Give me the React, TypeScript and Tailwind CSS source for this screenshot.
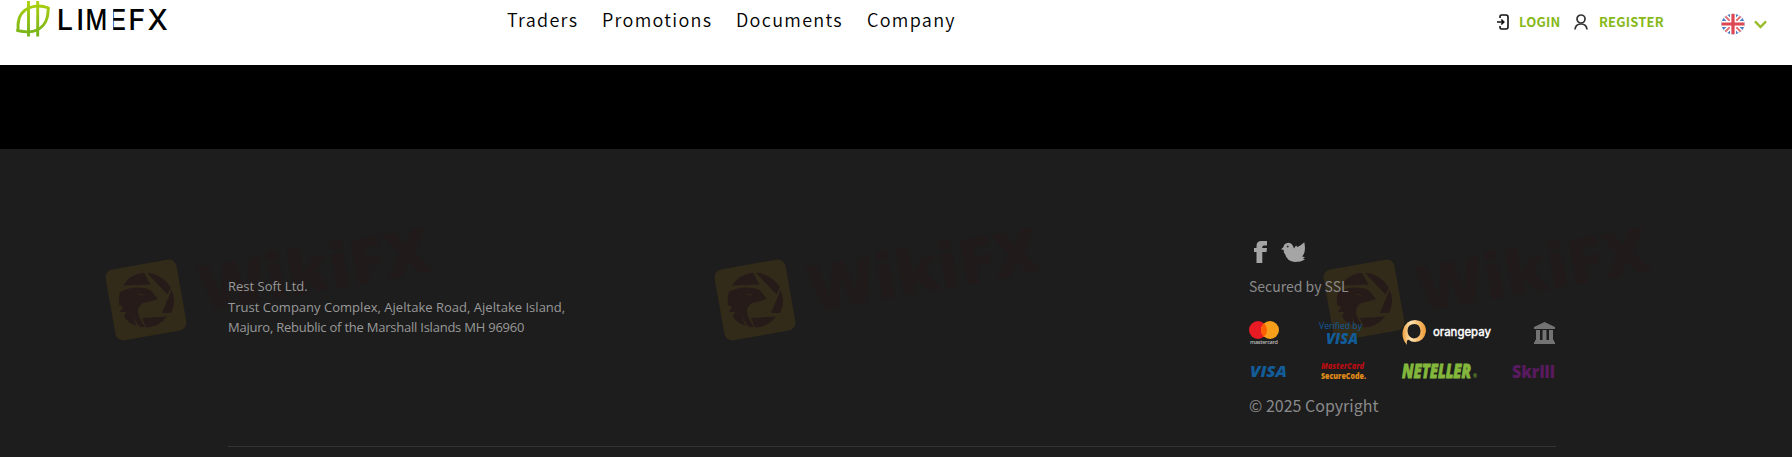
import { ReactNode } from 'react';

const NAV = [
  { label: 'Traders', width: 'w-[95px]' },
  { label: 'Promotions', width: 'w-[134px]' },
  { label: 'Documents', width: 'w-[131px]' },
  { label: 'Company', width: 'w-[92px]' },
];

export default function App() {
  return (
    <div className="h-[457px] w-full overflow-hidden bg-[#1d1d1d] font-['Noto_Sans_CJK_SC',sans-serif]">
      <Header />
      <div className="h-[84px] bg-black" />
      <Footer />
    </div>
  );
}

function Header() {
  return (
    <header className="flex h-[65px] items-start bg-white">
      <Logo />
      <nav className="ml-[338px] flex pt-[5px] text-[18px] leading-[28px] font-[350] tracking-[1.300px] text-black">
        {NAV.map((n) => (
          <a key={n.label} href="#" className={`${n.width} whitespace-nowrap`}>
            {n.label}
          </a>
        ))}
      </nav>
      <div className="ml-auto flex items-center pt-[9px] pr-[25px] text-[13px] leading-[20px] font-bold text-[#86b817]">
        <LoginIcon />
        <a href="#" className="ml-[10px] w-[55px] tracking-[0.2px]">LOGIN</a>
        <UserIcon />
        <a href="#" className="ml-[11px] w-[122px] tracking-[0.2px]">REGISTER</a>
        <Flag />
        <svg className="mt-[5px] ml-[9px] h-[9px] w-[13px]" viewBox="0 0 13 9" fill="none">
          <path d="M1 1.3 6.5 7 12 1.3" stroke="#98bd2b" strokeWidth="2.4" />
        </svg>
      </div>
    </header>
  );
}

function Logo() {
  return (
    <svg className="h-[40px] w-[169px]" viewBox="0 0 169 40">
      <defs>
        <linearGradient id="lime" x1="0" y1="0" x2="0" y2="40" gradientUnits="userSpaceOnUse">
          <stop offset="0" stopColor="#b0d30b" />
          <stop offset="1" stopColor="#6fae1b" />
        </linearGradient>
      </defs>
      <g fill="none" stroke="url(#lime)" strokeWidth="2.9" strokeLinejoin="round">
        <path d="M17.500 30.500C18 29 18.500 28 18 25C18.500 16 23 10 30 7.500C36 5.500 43 5.800 48.500 8C47.500 11 48.500 14 47 18C45.500 24 42 27.500 37 30C31 33 24 32 17.500 30.500Z" />
        <path d="M28.500 1V36.500M37.700 1V36.500" />
      </g>
      <g fontFamily="Inter, sans-serif" fontSize="29" fontWeight="500" fill="#000">
        <text x="56.800 76.300" y="30">LI</text>
        <text transform="scale(.82 1)" x="104.300" y="30">M</text>
        <text transform="scale(1.1 1)" x="97.800" y="30">E</text>
        <text x="128.300 147.500" y="30">FX</text>
      </g>
      <rect x="108.400" y="8" width="4.800" height="24" fill="#fff" />
    </svg>
  );
}

function LoginIcon() {
  return (
    <svg className="h-[16px] w-[12px]" viewBox="0 0 12 16" fill="none" stroke="#111" strokeWidth="1.600">
      <path d="M3 4V2.500Q3 1 4.500 1H9Q11 1 11 3V13Q11 15 9 15H4.500Q3 15 3 13.500V12" />
      <path d="M0 8H6.500M4.300 5.500 6.800 8 4.300 10.500" />
    </svg>
  );
}

function UserIcon() {
  return (
    <svg className="h-[16px] w-[14px]" viewBox="0 0 14 16" fill="none" stroke="#333" strokeWidth="1.700">
      <circle cx="7" cy="5" r="4" />
      <path d="M1 15.500Q1.500 10 7 10T13 15.500" />
    </svg>
  );
}

function Flag() {
  return (
    <svg className="mt-[4px] h-[22px] w-[24px]" viewBox="0 0 24 22">
      <clipPath id="flag"><ellipse cx="12" cy="11" rx="11.500" ry="10.300" /></clipPath>
      <g clipPath="url(#flag)">
        <path fill="#4c80c2" d="M0 0H24V22H0Z" />
        <path stroke="#fff" strokeWidth="5" d="M1 0 23 22M23 0 1 22" />
        <path stroke="#e66b73" strokeWidth="1.800" d="M1 0 23 22M23 0 1 22" />
        <path stroke="#fff" strokeWidth="6" d="M12 0V22M0 11H24" />
        <path stroke="#dd4653" strokeWidth="3.200" d="M12 0V22M0 11H24" />
      </g>
    </svg>
  );
}

function Footer() {
  return (
    <footer className="relative h-[308px] bg-[#1d1d1d]">
      <Watermark className="left-[100px]" />
      <Watermark className="left-[709px]" />
      <Watermark className="left-[1318px]" />
      <div className="relative ml-[228px] flex h-[298px] w-[1328px] justify-between border-b border-[#333]">
        <address className="flex flex-col pt-[127px] font-['Open_Sans',sans-serif] text-[13px] leading-[20.600px] font-medium text-[#999] not-italic">
          <span>Rest Soft Ltd.</span>
          <span className="tracking-[0.02px]">Trust Company Complex, Ajeltake Road, Ajeltake Island,</span>
          <span className="tracking-[-0.230px]">Majuro, Rebublic of the Marshall Islands MH 96960</span>
        </address>
        <div className="w-[307px] pt-[91px] text-[#8a8a8a]">
          <Social />
          <p className="mt-[11px] text-[14px] leading-[24px]">Secured by SSL</p>
          <Payments />
          <p className="mt-[1px] text-[16px] leading-[28px]">© 2025 Copyright</p>
        </div>
      </div>
    </footer>
  );
}

function Social() {
  return (
    <svg className="h-[23px] w-[70px]" viewBox="0 0 70 23" fill="#a5a5a5">
      <path d="M7.500 23V12H5V8H7.500V6Q7.500 1 12.500 1H18V5.500H15Q13.300 5.500 13.300 7V8H18L17.500 12H13.300V23Z" />
      <path d="M32 9.300 34.500 7Q35 3 39.500 2.700Q43.500 3 45 8.500L47 5.500 48.500 7Q52 5.500 55.300 2.300Q56.500 8 55.500 12Q55 14.500 53 16.500L56 17 54 18.500 56 19.500Q52 22 46 22Q38 21.500 36 14Q34.500 13 34.800 10Z" />
      <circle cx="38.700" cy="6.500" r="1" fill="#333" />
    </svg>
  );
}

function Row({ children }: { children: ReactNode }) {
  return <div className="flex h-[38px] items-center">{children}</div>;
}

function Payments() {
  return (
    <div className="mt-[16px] font-['Open_Sans',sans-serif]">
      <Row>
        <svg className="h-[26px] w-[70px]" viewBox="0 0 70 26">
          <circle cx="9" cy="10" r="9" fill="#e81b24" />
          <circle cx="21" cy="10" r="9" fill="#f79e1b" />
          <path d="M15 3.300A9 9 0 0 1 15 16.700A9 9 0 0 1 15 3.300" fill="#ff5f00" />
          <text x="1" y="24" fontSize="5.500" fontWeight="600" fill="#bbb" textLength="28">mastercard</text>
        </svg>
        <svg className="h-[26px] w-[83px] overflow-visible" viewBox="0 0 83 26" fill="#125c99">
          <text x="0" y="9" fontSize="8.500" fontWeight="500" textLength="43" lengthAdjust="spacingAndGlyphs">Verified by</text>
          <text x="7" y="23.500" fontSize="15" fontWeight="800" fontStyle="italic" textLength="32" lengthAdjust="spacingAndGlyphs">VISA</text>
        </svg>
        <svg className="h-[26px] w-[132px]" viewBox="0 0 132 26">
          <defs>
            <linearGradient id="orange">
              <stop offset="0" stopColor="#f0a040" />
              <stop offset=".35" stopColor="#ffe3b0" />
              <stop offset="1" stopColor="#ef9a34" />
            </linearGradient>
          </defs>
          <path fill="url(#orange)" fillRule="evenodd" d="M5 25Q-1 18 1 10Q4 0 13 0Q24 1 24 11.500Q22 22 13 22Q9 22 7 20Q4 19 5 25ZM12.500 4Q5.500 4 5.500 11Q6 18 12 18.500Q18.500 18 18.500 11Q18 4 12.500 4Z" />
          <text x="31" y="16" fontFamily="Inter" fontSize="12" fontWeight="500" fill="#fff" stroke="#fff" strokeWidth=".3" textLength="58" lengthAdjust="spacingAndGlyphs">orangepay</text>
        </svg>
        <svg className="h-[22px] w-[21px]" viewBox="0 0 21 22" fill="#737373">
          <path d="M0 5 10.500 0 21 5V7H0ZM2 8H6V18H2ZM8.500 8H12.500V18H8.500ZM15 8H19V18H15ZM1 18H20V20H1ZM0 20H21V22H0Z" />
        </svg>
      </Row>
      <Row>
        <svg className="h-[18px] w-[72px] overflow-visible" viewBox="0 0 72 18">
          <text x="1" y="15" fontSize="16" fontWeight="800" fontStyle="italic" fill="#125c99" textLength="37" lengthAdjust="spacingAndGlyphs">VISA</text>
        </svg>
        <svg className="h-[20px] w-[81px] overflow-visible" viewBox="0 0 81 20" fontSize="9" fontWeight="800">
          <text x="0" y="7.500" fill="#b50c12" fontStyle="italic" textLength="43" lengthAdjust="spacingAndGlyphs">MasterCard</text>
          <text x="0" y="18" fill="#e18b18" textLength="45" lengthAdjust="spacingAndGlyphs">SecureCode.</text>
        </svg>
        <svg className="h-[20px] w-[110px] overflow-visible" viewBox="0 0 110 20" fill="#83b83c">
          <text x="0" y="17" fontSize="19" fontWeight="800" fontStyle="italic" stroke="#83b83c" strokeWidth=".8" textLength="69" lengthAdjust="spacingAndGlyphs">NETELLER</text>
          <text x="71" y="17" fontSize="5">®</text>
        </svg>
        <svg className="h-[20px] w-[44px] overflow-visible" viewBox="0 0 44 20">
          <text x="0" y="17" fontSize="17" fontWeight="800" fill="#591a60" textLength="43" lengthAdjust="spacingAndGlyphs">Skrill</text>
        </svg>
      </Row>
    </div>
  );
}

// Faint tilted eagle badge with its brand name
function Watermark({ className }: { className: string }) {
  return (
    <svg className={`absolute top-[61px] h-[150px] w-[350px] overflow-visible ${className}`} viewBox="0 0 350 150">
      <rect x="10" y="54" width="72" height="72" rx="8" fill="#332b19" transform="rotate(-10 46 90)" />
      <g fill="#271b1a">
        <path d="M23 75.500Q30 64 44 62.700L50.500 74.500Z" />
        <path d="M47 62.800Q62 64 71 77.500L67.500 84.500Z" />
        <path d="M71.500 80Q77 91 71 103L62 103Z" />
        <path d="M42 108 67 106.500Q59 117 46 117.500Z" />
        <path d="M20 82Q30 76 44 78Q51 79 53 83L58 89 50 91.500 43 93Q38 96 38 102Q39 109 45 117L40 117Q34 110 34 106Q34 112 37 116Q27 113 24 106L26 102 20 102 23 97 19 95Q18 88 20 82Z" />
      </g>
      <path d="M38 84 43 85" stroke="#332b19" />
      <text transform="rotate(-10 103 102)" x="103" y="102" fontFamily="Open Sans" fontSize="63" fontWeight="800" fill="#201b1a" textLength="235" lengthAdjust="spacingAndGlyphs">WikiFX</text>
    </svg>
  );
}
